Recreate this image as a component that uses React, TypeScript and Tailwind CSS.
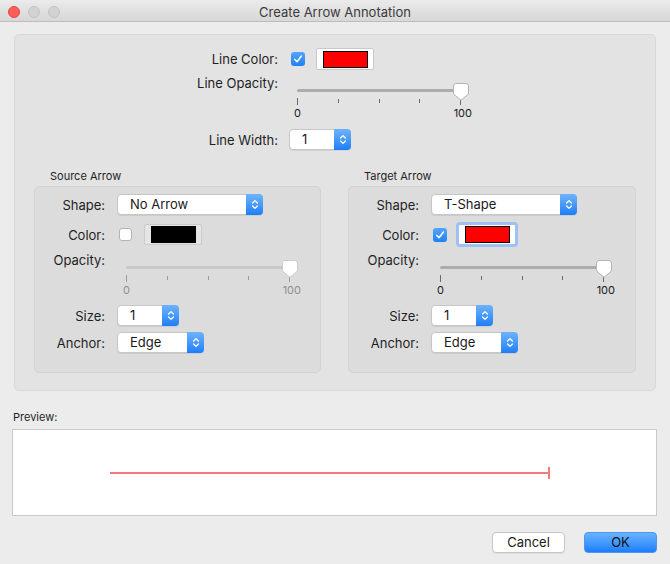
import React from "react";

const labelText = "text-[13px] leading-[16px] text-[#1f1f1f]";

const Chevrons: React.FC = () => (
  <svg width="8" height="13" viewBox="0 0 8 13" fill="none">
    <path d="M1.6 5 L4 2.6 L6.4 5" stroke="white" strokeWidth="1.3" strokeLinecap="round" strokeLinejoin="round" />
    <path d="M1.6 8 L4 10.4 L6.4 8" stroke="white" strokeWidth="1.3" strokeLinecap="round" strokeLinejoin="round" />
  </svg>
);

interface PopupProps {
  value: string;
  className: string;
}

const Popup: React.FC<PopupProps> = ({ value, className }) => (
  <div
    className={`flex h-[21px] rounded-[4px] border border-[#c6c6c6] bg-white shadow-[0_1px_0_rgba(0,0,0,0.07)] ${className}`}
  >
    <span className="flex-1 pl-[12px] text-[13px] leading-[19px] text-[#1a1a1a]">{value}</span>
    <span className="-my-px -mr-px flex w-[17px] items-center justify-center rounded-r-[4px] bg-linear-to-b from-[#6db3fb] to-[#1a7ef9]">
      <Chevrons />
    </span>
  </div>
);

const Checkbox: React.FC<{ checked?: boolean }> = ({ checked }) =>
  checked ? (
    <span className="flex h-[14px] w-[14px] items-center justify-center rounded-[3px] bg-linear-to-b from-[#54a6fb] to-[#1d7ff7]">
      <svg width="10" height="10" viewBox="0 0 10 10" fill="none">
        <path d="M1.8 5.4 L4 7.8 L8.4 2" stroke="white" strokeWidth="1.5" strokeLinecap="round" strokeLinejoin="round" />
      </svg>
    </span>
  ) : (
    <span className="h-[13px] w-[13px] rounded-[3px] border border-[#b3b3b3] bg-white" />
  );

interface SwatchProps {
  outer: string;
  inner: string;
}

const Swatch: React.FC<SwatchProps> = ({ outer, inner }) => (
  <div className={`flex w-[58px] items-center justify-center rounded-[2px] border ${outer}`}>
    <div className={`h-[17px] w-[45px] border border-black ${inner}`} />
  </div>
);

const Thumb: React.FC<{ disabled?: boolean }> = ({ disabled }) => (
  <svg className="absolute left-[156px] top-0" width="16" height="18" viewBox="0 0 16 18" fill="none">
    <path
      d="M3 0.5 H13 Q15.5 0.5 15.5 3 V11 L8 17.3 L0.5 11 V3 Q0.5 0.5 3 0.5 Z"
      fill="white"
      stroke={disabled ? "#cdcdcd" : "#b3b3b3"}
    />
  </svg>
);

const Slider: React.FC<{ disabled?: boolean }> = ({ disabled }) => {
  const track = disabled ? "bg-[#c8c8c8]" : "bg-[#acacac]";
  const tick = disabled ? "bg-[#9c9c9c]" : "bg-[#6a6a6a]";
  const label = disabled ? "text-[#8f8f8f]" : "text-[#1a1a1a]";
  return (
    <div className="w-[178px] pl-[4px]">
      <div className="relative h-[15px] w-[164px] pt-[6px]">
        <div className={`h-[3px] w-[162px] rounded-full ${track}`} />
        <Thumb disabled={disabled} />
      </div>
      <div className="flex h-[7px] w-[164px] items-start justify-between">
        <span className={`h-[7px] w-px ${tick}`} />
        <span className={`mt-px h-[4px] w-px ${tick}`} />
        <span className={`mt-px h-[4px] w-px ${tick}`} />
        <span className={`mt-px h-[4px] w-px ${tick}`} />
        <span className={`h-[7px] w-px ${tick}`} />
      </div>
      <div className={`-ml-[3px] mt-[2px] flex w-[178px] justify-between text-[11px] leading-[13px] ${label}`}>
        <span>0</span>
        <span>100</span>
      </div>
    </div>
  );
};

interface ArrowGroupProps {
  title: string;
  width: string;
  shape: string;
  checked: boolean;
  target?: boolean;
}

const ArrowGroup: React.FC<ArrowGroupProps> = ({ title, width, shape, checked, target }) => (
  <div className={width}>
    <div className="pl-[16px] text-[11px] leading-[13px] text-[#1f1f1f]">{title}</div>
    <div className="mt-[3px] h-[187px] rounded-[5px] border border-[#d3d3d3] bg-[#dcdcdc] pt-[7px]">
      <div className="flex h-[21px] items-center">
        <span className={`w-[70px] text-right ${labelText}`}>Shape:</span>
        <Popup value={shape} className="ml-[12px] w-[146px]" />
      </div>
      <div className="mt-[9px] flex h-[21px] items-center">
        <span className={`w-[70px] text-right ${labelText}`}>Color:</span>
        <span className="ml-[14px] flex w-[14px]">
          <Checkbox checked={checked} />
        </span>
        <span className="ml-[11px] flex h-[21px]">
          {target ? (
            <Swatch
              outer="border-[#9fc3f3] bg-white shadow-[0_0_0_2px_#9dc1f4]"
              inner="bg-[#ff0000]"
            />
          ) : (
            <Swatch outer="border-[#cbcbcb] bg-[#e5e5e5]" inner="bg-black" />
          )}
        </span>
      </div>
      <div className="mt-[7px] flex items-start">
        <span className={`w-[70px] text-right ${labelText}`}>Opacity:</span>
        <div className="ml-[17px] mt-[8px]">
          <Slider disabled={!target} />
        </div>
      </div>
      <div className="mt-[8px] flex h-[21px] items-center">
        <span className={`w-[70px] text-right ${labelText}`}>Size:</span>
        <Popup value="1" className="ml-[12px] w-[62px]" />
      </div>
      <div className="mt-[6px] flex h-[21px] items-center">
        <span className={`w-[70px] text-right ${labelText}`}>Anchor:</span>
        <Popup value="Edge" className="ml-[12px] w-[87px]" />
      </div>
    </div>
  </div>
);

const TitleBar: React.FC = () => (
  <div className="grid h-[22px] grid-cols-[66px_1fr_66px] items-center border-b border-[#bcbcbc] bg-linear-to-b from-[#ebebeb] to-[#d7d7d7] pt-[2px]">
    <div className="flex gap-[8px] pl-[8px]">
      <span className="h-[12px] w-[12px] rounded-full border border-[#e2463f] bg-[#fc5f59]" />
      <span className="h-[12px] w-[12px] rounded-full border border-[#c3c3c3] bg-[#d2d2d2]" />
      <span className="h-[12px] w-[12px] rounded-full border border-[#c3c3c3] bg-[#d2d2d2]" />
    </div>
    <div className="text-center text-[13px] leading-[16px] text-[#3a3a3a]">Create Arrow Annotation</div>
    <div />
  </div>
);

export default function App() {
  return (
    <div className="flex h-[564px] w-[670px] flex-col overflow-hidden bg-[#ececec] font-['Inter','Noto_Sans',sans-serif] text-[#1f1f1f]">
      <TitleBar />

      <div className="mx-[14px] mt-[12px] h-[357px] rounded-[5px] border border-[#d8d8d8] bg-[#e3e3e3] pt-[13px]">
        <div className="flex h-[22px] items-center">
          <span className={`w-[263px] text-right ${labelText}`}>Line Color:</span>
          <span className="ml-[13px] flex">
            <Checkbox checked />
          </span>
          <span className="ml-[11px] flex h-[22px]">
            <Swatch outer="border-[#c9c9c9] bg-white" inner="bg-[#ff0000]" />
          </span>
        </div>

        <div className="mt-[5px] flex items-start">
          <span className={`w-[263px] text-right ${labelText}`}>Line Opacity:</span>
          <div className="ml-[15px] mt-[8px]">
            <Slider />
          </div>
        </div>

        <div className="mt-[9px] flex h-[21px] items-center">
          <span className={`w-[263px] text-right ${labelText}`}>Line Width:</span>
          <Popup value="1" className="ml-[11px] w-[62px]" />
        </div>

        <div className="mt-[20px] flex gap-[27px] pl-[19px]">
          <ArrowGroup title="Source Arrow" width="w-[287px]" shape="No Arrow" checked={false} />
          <ArrowGroup title="Target Arrow" width="w-[288px]" shape="T-Shape" checked target />
        </div>
      </div>

      <div className="ml-[13px] mt-[20px] text-[11px] leading-[13px] text-[#1f1f1f]">Preview:</div>
      <div className="ml-[12px] mt-[5px] h-[87px] w-[645px] border border-[#cacaca] bg-white">
        <svg width="643" height="85" viewBox="0 0 643 85">
          <line x1="97" y1="43" x2="536" y2="43" stroke="#f57b7b" strokeWidth="2" />
          <line x1="536" y1="37" x2="536" y2="49" stroke="#f57b7b" strokeWidth="2" />
        </svg>
      </div>

      <div className="mt-[16px] flex justify-end gap-[19px] pr-[13px]">
        <button className="h-[21px] w-[73px] rounded-[4px] border border-[#c6c6c6] bg-white text-[13px] leading-[19px] text-[#1a1a1a] shadow-[0_1px_0_rgba(0,0,0,0.06)]">
          Cancel
        </button>
        <button className="h-[21px] w-[73px] rounded-[4px] border border-[#4a95f6] bg-linear-to-b from-[#68b3fe] to-[#1a7efd] text-[13px] leading-[19px] text-[#111]">
          OK
        </button>
      </div>
    </div>
  );
}
